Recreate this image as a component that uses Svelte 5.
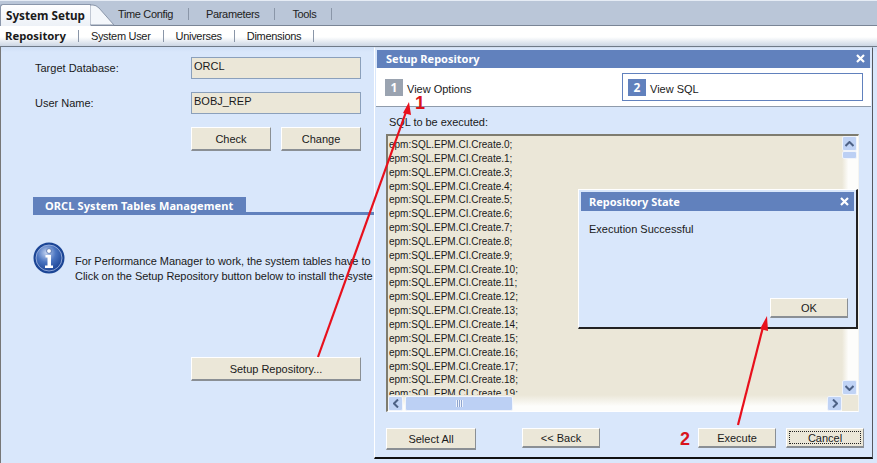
<script>
  const tabs = ["Time Config", "Parameters", "Tools"];
  const subTabs = ["System User", "Universes", "Dimensions"];
  const sqlLines = [0, 1, 3, 4, 5, 6, 7, 8, 9, 10, 11, 12, 13, 14, 15, 16, 17, 18, 19];
</script>

<div class="page">
  <div class="tabbar">
    <div class="tab-active">System Setup</div>
    <svg class="tab-corner" width="26" height="24" viewBox="0 0 26 24">
      <path d="M0 3 H3 Q6 3 9 6 L24 23 H0 Z" fill="#f4f7fb" stroke="#8b97ab" />
    </svg>
    {#each tabs as tab}
      <div class="tab">{tab}</div>
    {/each}
  </div>

  <div class="subbar">
    <div class="sub sub-active">Repository</div>
    {#each subTabs as tab}
      <div class="sub">{tab}</div>
    {/each}
  </div>

  <div class="main">
    <div class="form">
      <div class="field">
        <span class="field-label">Target Database:</span>
        <div class="input">ORCL</div>
      </div>
      <div class="field">
        <span class="field-label">User Name:</span>
        <div class="input">BOBJ_REP</div>
      </div>
      <div class="form-buttons">
        <div class="btn check">Check</div>
        <div class="btn check">Change</div>
      </div>
    </div>

    <div class="section">
      <div class="section-title">ORCL System Tables Management</div>
    </div>

    <div class="info">
      <svg class="info-icon" width="32" height="32" viewBox="0 0 32 32">
        <defs>
          <radialGradient id="infoBlue" cx="0.4" cy="0.3" r="0.8">
            <stop offset="0" stop-color="#c3d3f0" />
            <stop offset="0.45" stop-color="#4a74c0" />
            <stop offset="1" stop-color="#123a8c" />
          </radialGradient>
        </defs>
        <circle cx="16" cy="16" r="15.5" fill="#1b4595" />
        <circle cx="16" cy="16" r="13" fill="url(#infoBlue)" stroke="#a9bde4" stroke-width="0.8" />
        <circle cx="16" cy="9" r="2.4" fill="#fff" stroke="#24478f" stroke-width="0.6" />
        <path d="M12.5 13 H18 V23.5 H20 V26 H12 V23.5 H14.5 V15.5 H12.5 Z" fill="#fff" />
      </svg>
      <div class="info-text">
        <div>For Performance Manager to work, the system tables have to</div>
        <div>Click on the Setup Repository button below to install the syste</div>
      </div>
    </div>

    <div class="btn setup">Setup Repository...</div>
  </div>

  <div class="dialog setup-dialog">
    <div class="titlebar">
      <span>Setup Repository</span>
      <svg width="9" height="9" viewBox="0 0 9 9"><path d="M1 1 L8 8 M8 1 L1 8" stroke="#fff" stroke-width="2.2" /></svg>
    </div>
    <div class="steps">
      <div class="step">
        <span class="step-num step-num-off">1</span>
        <span class="step-text">View Options</span>
      </div>
      <div class="step step-current">
        <span class="step-num">2</span>
        <span class="step-text">View SQL</span>
      </div>
    </div>
    <div class="dialog-body">
      <div class="sql-label">SQL to be executed:</div>
      <div class="sql-box">
        <div class="sql-lines">
          {#each sqlLines as n}
            <div>epm:SQL.EPM.CI.Create.{n};</div>
          {/each}
        </div>
        <div class="vscroll">
          <div class="sb-btn">
            <svg width="9" height="6" viewBox="0 0 9 6"><path d="M0.5 5 L4.5 1 L8.5 5" fill="none" stroke="#4d6185" stroke-width="2" /></svg>
          </div>
          <div class="sb-thumb-v"></div>
          <div class="sb-btn sb-down">
            <svg width="9" height="6" viewBox="0 0 9 6"><path d="M0.5 1 L4.5 5 L8.5 1" fill="none" stroke="#4d6185" stroke-width="2" /></svg>
          </div>
        </div>
        <div class="hscroll">
          <div class="sb-btn">
            <svg width="6" height="9" viewBox="0 0 6 9"><path d="M5 0.5 L1 4.5 L5 8.5" fill="none" stroke="#4d6185" stroke-width="2" /></svg>
          </div>
          <div class="sb-thumb-h"><span class="grip"></span></div>
          <div class="sb-btn sb-right">
            <svg width="6" height="9" viewBox="0 0 6 9"><path d="M1 0.5 L5 4.5 L1 8.5" fill="none" stroke="#4d6185" stroke-width="2" /></svg>
          </div>
        </div>
      </div>
      <div class="dialog-buttons">
        <div class="btn select-all">Select All</div>
        <div class="btn small back">&lt;&lt; Back</div>
        <div class="btn small execute">Execute</div>
        <div class="btn small cancel"><span class="focus">Cancel</span></div>
      </div>
    </div>
  </div>

  <div class="dialog state-dialog">
    <div class="titlebar state-title">
      <span>Repository State</span>
      <svg width="9" height="9" viewBox="0 0 9 9"><path d="M1 1 L8 8 M8 1 L1 8" stroke="#fff" stroke-width="2.2" /></svg>
    </div>
    <div class="state-body">
      <div>Execution Successful</div>
      <div class="btn small ok">OK</div>
    </div>
  </div>

  <svg class="arrows" width="877" height="463" viewBox="0 0 877 463">
    <path d="M318 357 L406 112" stroke="#e8101c" stroke-width="2.2" fill="none" />
    <path d="M409 102 L403 113 L411 115 Z" fill="#e8101c" />
    <path d="M738 425 L763 327" stroke="#e8101c" stroke-width="2.2" fill="none" />
    <path d="M767 316 L760 329 L768 331 Z" fill="#e8101c" />
  </svg>
  <span class="num one">1</span>
  <span class="num two">2</span>
</div>

<style>
  :global(body) {
    margin: 0;
    background: #d9e7fb;
  }

  .page {
    position: relative;
    width: 877px;
    height: 463px;
    overflow: hidden;
    font-family: "Liberation Sans", Arial, sans-serif;
    font-size: 11px;
    color: #1a1a1a;
  }

  .tabbar {
    display: flex;
    align-items: flex-end;
    height: 24px;
    background: #bac6d8;
    border-top: 1px solid #e6ecf5;
    border-bottom: 1px solid #7a8596;
  }

  .tab-active {
    display: flex;
    align-items: center;
    height: 19px;
    padding: 0 0 2px 5px;
    width: 85px;
    background: linear-gradient(#ffffff, #edf1f7);
    border-left: 1px solid #8b97ab;
    border-top: 1px solid #8b97ab;
    border-radius: 3px 0 0 0;
    font-family: "Noto Sans", sans-serif;
    font-weight: bold;
    font-size: 11.7px;
    white-space: nowrap;
    margin-bottom: -1px;
    position: relative;
    z-index: 1;
  }

  .tab-corner {
    margin-bottom: -1px;
    margin-left: -1px;
    position: relative;
    z-index: 1;
    flex: none;
  }

  .tab {
    height: 12px;
    line-height: 12px;
    margin-bottom: 5px;
    padding: 0 15px 0 17px;
    border-right: 1px solid #8a96a8;
    color: #222;
    white-space: nowrap;
    letter-spacing: -0.35px;
  }

  .tab-corner + .tab {
    padding-left: 2px;
  }

  .subbar {
    display: flex;
    align-items: center;
    height: 20px;
    background: linear-gradient(#ffffff 55%, #ccd6e4);
    border-bottom: 1px solid #6f7a88;
    padding-left: 4px;
  }

  .sub {
    height: 12px;
    line-height: 12px;
    padding: 0 12px;
    border-right: 1px solid #8a96a8;
    white-space: nowrap;
    letter-spacing: -0.3px;
  }

  .sub-active {
    padding-left: 1px;
    padding-right: 12px;
    font-family: "Noto Sans", sans-serif;
    font-weight: bold;
    font-size: 11.3px;
    letter-spacing: 0;
  }

  .main {
    height: 417px;
    box-sizing: border-box;
    padding: 10px 0 0 32px;
    background: linear-gradient(#cfdff6, #d9e7fb 5px);
    border-left: 1px solid #777;
  }

  .form {
    width: 328px;
  }

  .field {
    display: flex;
    align-items: center;
    justify-content: space-between;
    height: 22px;
    margin-bottom: 13px;
  }

  .field-label {
    padding-left: 2px;
  }

  .input {
    box-sizing: border-box;
    width: 170px;
    height: 22px;
    padding: 1px 2px 4px;
    line-height: 14px;
    background: #ebe7d8;
    border: 1px solid #8ba0bb;
  }

  .form-buttons {
    display: flex;
    justify-content: flex-end;
    gap: 10px;
  }

  .btn {
    display: flex;
    align-items: center;
    justify-content: center;
    box-sizing: border-box;
    flex: none;
    background: #ebe7d8;
    border-top: 1px solid #fff;
    border-left: 1px solid #fff;
    border-right: 1px solid #8a8f94;
    border-bottom: 2px solid #8a8f94;
  }

  .check {
    width: 80px;
    height: 24px;
  }

  .section {
    width: 341px;
    margin-top: 46px;
    height: 15px;
    border-bottom: 3px solid #6181bd;
  }

  .section-title {
    width: 213px;
    height: 18px;
    line-height: 17px;
    box-sizing: border-box;
    padding-left: 12px;
    background: #6181bd;
    color: #fff;
    font-family: "Noto Sans", sans-serif;
    font-weight: bold;
    font-size: 11px;
    letter-spacing: 0.1px;
    white-space: nowrap;
  }

  .info {
    display: flex;
    align-items: flex-start;
    gap: 10px;
    margin-top: 27px;
    white-space: nowrap;
  }

  .info-icon {
    flex: none;
  }

  .info-text {
    width: 299px;
    overflow: hidden;
    padding-top: 12px;
    line-height: 15px;
    letter-spacing: -0.05px;
  }

  .setup {
    width: 170px;
    height: 24px;
    margin: 73px 0 0 158px;
  }

  .dialog {
    position: absolute;
    box-sizing: border-box;
    background: #d9e7fb;
  }

  .setup-dialog {
    left: 374px;
    top: 47px;
    width: 499px;
    height: 412px;
    padding: 2px 2px 0;
    border-left: 1px solid #fff;
    border-top: 1px solid #d3deef;
    border-right: 1px solid #55585e;
    border-bottom: 2px solid #111;
    display: flex;
    flex-direction: column;
  }

  .titlebar {
    display: flex;
    align-items: center;
    justify-content: space-between;
    height: 18px;
    flex: none;
    padding: 0 5px 1px 9px;
    box-sizing: border-box;
    background: #6181bd;
    color: #fff;
    font-family: "Noto Sans", sans-serif;
    font-weight: bold;
    font-size: 11px;
  }

  .steps {
    display: flex;
    justify-content: space-between;
    align-items: center;
    height: 39px;
    flex: none;
    box-sizing: border-box;
    margin: 0 -1px;
    padding: 0 8px 0 9px;
    background: #fff;
    border-bottom: 1px solid #8f9bab;
  }

  .step {
    display: flex;
    align-items: center;
    gap: 4px;
  }

  .step-text {
    padding-top: 3px;
  }

  .step-current {
    box-sizing: border-box;
    width: 241px;
    height: 28px;
    padding-left: 5px;
    border: 1px solid #6181bd;
  }

  .step-num {
    display: flex;
    align-items: center;
    justify-content: center;
    width: 18px;
    height: 17px;
    background: #6181bd;
    color: #fff;
    font-family: "Noto Sans", sans-serif;
    font-weight: bold;
    font-size: 12px;
  }

  .step-num-off {
    background: #9aa3b0;
  }

  .dialog-body {
    flex: 1;
    display: flex;
    flex-direction: column;
    padding: 0 9px 0 9px;
  }

  .sql-label {
    height: 27px;
    line-height: 14px;
    padding: 8px 0 0 3px;
    box-sizing: border-box;
    flex: none;
    letter-spacing: -0.05px;
  }

  .sql-box {
    position: relative;
    width: 473px;
    height: 278px;
    box-sizing: border-box;
    overflow: hidden;
    background: #ebe7d8;
    border-top: 2px solid #7e7c6f;
    border-left: 2px solid #7e7c6f;
    border-right: 1px solid #f4f4f0;
    border-bottom: 1px solid #fff;
  }

  .sql-lines {
    padding-top: 2px;
    padding-left: 1px;
    font-size: 10px;
    line-height: 13.85px;
    white-space: nowrap;
  }

  .vscroll {
    position: absolute;
    top: 0;
    right: 0;
    bottom: 16px;
    width: 16px;
    background: linear-gradient(90deg, #ebe7d8, #fdfdfb 40%);
    display: flex;
    flex-direction: column;
  }

  .hscroll {
    position: absolute;
    left: 0;
    right: 16px;
    bottom: 0;
    height: 16px;
    display: flex;
    align-items: center;
    background: linear-gradient(#ebe7d8, #fdfdfb 70%);
  }

  .sb-btn {
    display: flex;
    align-items: center;
    justify-content: center;
    width: 15px;
    height: 15px;
    box-sizing: border-box;
    flex: none;
    border: 1px solid #f0f4fb;
    border-radius: 2px;
    background: #c0d3f5;
  }

  .sb-down {
    margin-top: auto;
  }

  .sb-right {
    margin-left: auto;
  }

  .sb-thumb-v {
    height: 8px;
    width: 15px;
    box-sizing: border-box;
    border: 1px solid #f0f4fb;
    border-radius: 2px;
    background: #bcd0f4;
  }

  .sb-thumb-h {
    display: flex;
    align-items: center;
    justify-content: center;
    width: 108px;
    height: 15px;
    margin-left: 2px;
    box-sizing: border-box;
    border: 1px solid #f0f4fb;
    border-radius: 2px;
    background: #bcd0f4;
  }

  .grip {
    width: 7px;
    height: 7px;
    background: repeating-linear-gradient(90deg, #eef3fc 0 1px, #8fa5cf 1px 2px);
  }

  .dialog-buttons {
    display: flex;
    align-items: flex-start;
    margin-top: 16px;
  }

  .small {
    width: 78px;
    height: 20px;
  }

  .select-all {
    width: 90px;
    height: 22px;
    margin-right: 46px;
  }

  .back {
    margin-right: 98px;
  }

  .execute {
    margin-right: 10px;
  }

  .cancel {
    padding: 2px;
  }

  .focus {
    display: flex;
    align-items: center;
    justify-content: center;
    width: 100%;
    height: 100%;
    outline: 1px dotted #222;
    outline-offset: -1px;
  }

  .state-dialog {
    left: 578px;
    top: 189px;
    width: 280px;
    height: 140px;
    padding: 2px 2px 0;
    border-left: 1px solid #fff;
    border-top: 1px solid #fff;
    border-right: 2px solid #222;
    border-bottom: 2px solid #222;
    display: flex;
    flex-direction: column;
  }

  .state-title {
    height: 19px;
    padding-left: 8px;
    padding-right: 5px;
  }

  .state-body {
    flex: 1;
    display: flex;
    flex-direction: column;
    align-items: flex-start;
    padding: 12px 6px 0 8px;
  }

  .ok {
    margin: 63px 0 0 auto;
  }

  .arrows {
    position: absolute;
    left: 0;
    top: 0;
    pointer-events: none;
  }

  .num {
    position: absolute;
    font-family: "Liberation Sans", Arial, sans-serif;
    font-weight: bold;
    font-size: 18px;
    line-height: 18px;
    color: #d8141c;
  }

  .one {
    left: 415px;
    top: 94px;
  }

  .two {
    left: 680px;
    top: 430px;
  }
</style>
